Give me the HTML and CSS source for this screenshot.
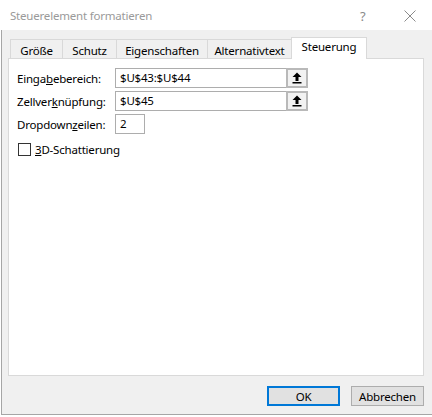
FILE: index.html
```html
<!DOCTYPE html>
<html lang="de">
<head>
<meta charset="utf-8">
<title>Steuerelement formatieren</title>
<link rel="stylesheet" href="styles.css">
</head>
<body>
<div class="dialog">
  <div class="titlebar">
    <span class="title">Steuerelement formatieren</span>
    <span class="help">?</span>
    <svg class="close" width="12" height="12" viewBox="0 0 12 12"><path d="M0.5 0.5 L11.5 11.5 M11.5 0.5 L0.5 11.5" stroke="#8a8a8a" stroke-width="1" fill="none"/></svg>
  </div>
  <div class="body">
    <div class="tabs">
      <div class="tab w1">Größe</div>
      <div class="tab w2">Schutz</div>
      <div class="tab w3">Eigenschaften</div>
      <div class="tab w4">Alternativtext</div>
      <div class="tab active">Steuerung</div>
    </div>
    <div class="panel">
      <div class="row">
        <label class="lbl">Einga<u>b</u>ebereich:</label>
        <div class="ref">
          <div class="field wide">$U$43:$U$44</div>
          <div class="pick"><svg width="10" height="12" viewBox="0 0 10 12"><path d="M5 0.5 L9.5 5 L6.5 5 L6.5 9 L3.5 9 L3.5 5 L0.5 5 Z" fill="#000"/><rect x="0.5" y="10" width="9" height="1.5" fill="#000"/></svg></div>
        </div>
      </div>
      <div class="row">
        <label class="lbl">Zellver<u>k</u>nüpfung:</label>
        <div class="ref">
          <div class="field wide">$U$45</div>
          <div class="pick"><svg width="10" height="12" viewBox="0 0 10 12"><path d="M5 0.5 L9.5 5 L6.5 5 L6.5 9 L3.5 9 L3.5 5 L0.5 5 Z" fill="#000"/><rect x="0.5" y="10" width="9" height="1.5" fill="#000"/></svg></div>
        </div>
      </div>
      <div class="row">
        <label class="lbl">Dropdown<u>z</u>eilen:</label>
        <div class="field small">2</div>
      </div>
      <div class="check-row">
        <span class="box"></span>
        <span class="check-label"><u>3</u>D-Schattierung</span>
      </div>
    </div>
    <div class="footer">
      <button class="btn default">OK</button>
      <button class="btn">Abbrechen</button>
    </div>
  </div>
</div>
</body>
</html>
```

FILE: styles.css
```css
* { box-sizing: border-box; }
html, body { margin: 0; padding: 0; background: #ffffff; }
body {
  width: 432px;
  height: 417px;
  overflow: hidden;
  font-family: "Noto Sans", "Open Sans", sans-serif;
  font-size: 11.5px;
  letter-spacing: -0.2px;
  color: #000;
}
.dialog { width: 432px; }
.titlebar {
  height: 30px;
  display: flex;
  align-items: center;
  padding-left: 10px;
  background: #fff;
  position: relative;
}
.title { color: #9a9a9a; font-size: 11.5px; }
.help {
  position: absolute;
  left: 360px;
  top: 7px;
  color: #8a8a8a;
  font-size: 13px;
}
.close { position: absolute; left: 404px; top: 10px; }
.body {
  margin-left: 1px;
  height: 385px;
  background: #f0f0f0;
  border-left: 1px solid #a6a6a6;
  border-bottom: 1px solid #a6a6a6;
  padding-top: 7px;
}
.tabs {
  display: flex;
  align-items: flex-end;
  height: 21px;
  padding-left: 8px;
  position: relative;
  z-index: 1;
}
.tab {
  height: 19px;
  border: 1px solid #d9d9d9;
  border-bottom: none;
  border-right: none;
  text-align: center;
  line-height: 19px;
  padding-top: 1px;
  color: #000;
  background: #f0f0f0;
}
.w1 { width: 52px; }
.w2 { width: 54px; }
.w3 { width: 91px; }
.w4 { width: 84px; }
.tab.active {
  width: 76px;
  height: 22px;
  margin-bottom: -1px;
  background: #fff;
  border-right: 1px solid #d9d9d9;
  line-height: 18px;
  padding-top: 0;
}
.panel {
  margin-left: 6px;
  width: 416px;
  height: 318px;
  background: #fff;
  border: 1px solid #d9d9d9;
  padding: 9px 0 0 8px;
}
.row {
  display: flex;
  align-items: center;
  height: 20px;
  margin-bottom: 3px;
}
.lbl { width: 98px; }
.ref { display: flex; height: 20px; }
.field {
  height: 20px;
  border: 1px solid #adadad;
  padding-left: 4px;
  line-height: 18px;
  background: #fff;
}
.wide { width: 171px; border-right: none; }
.small { width: 30px; }
.pick {
  width: 22px;
  height: 20px;
  border: 2px solid #b9b9b9;
  background: #f2f2f2;
  display: flex;
  align-items: center;
  justify-content: center;
}
.check-row {
  display: flex;
  align-items: center;
  margin-top: 7px;
  height: 17px;
  padding-left: 1px;
}
.box {
  width: 13px;
  height: 13px;
  border: 1px solid #333;
  background: #fff;
  margin-right: 4px;
}
.footer {
  display: flex;
  justify-content: flex-end;
  gap: 11px;
  padding-right: 8px;
  margin-top: 10px;
}
.btn {
  width: 73px;
  height: 20px;
  font-family: "Noto Sans", "Open Sans", sans-serif;
  font-size: 11.5px;
  letter-spacing: -0.2px;
  background: #e1e1e1;
  border: 1px solid #adadad;
  color: #000;
  padding: 0;
}
.btn.default { border: 2px solid #0078d7; }
```
